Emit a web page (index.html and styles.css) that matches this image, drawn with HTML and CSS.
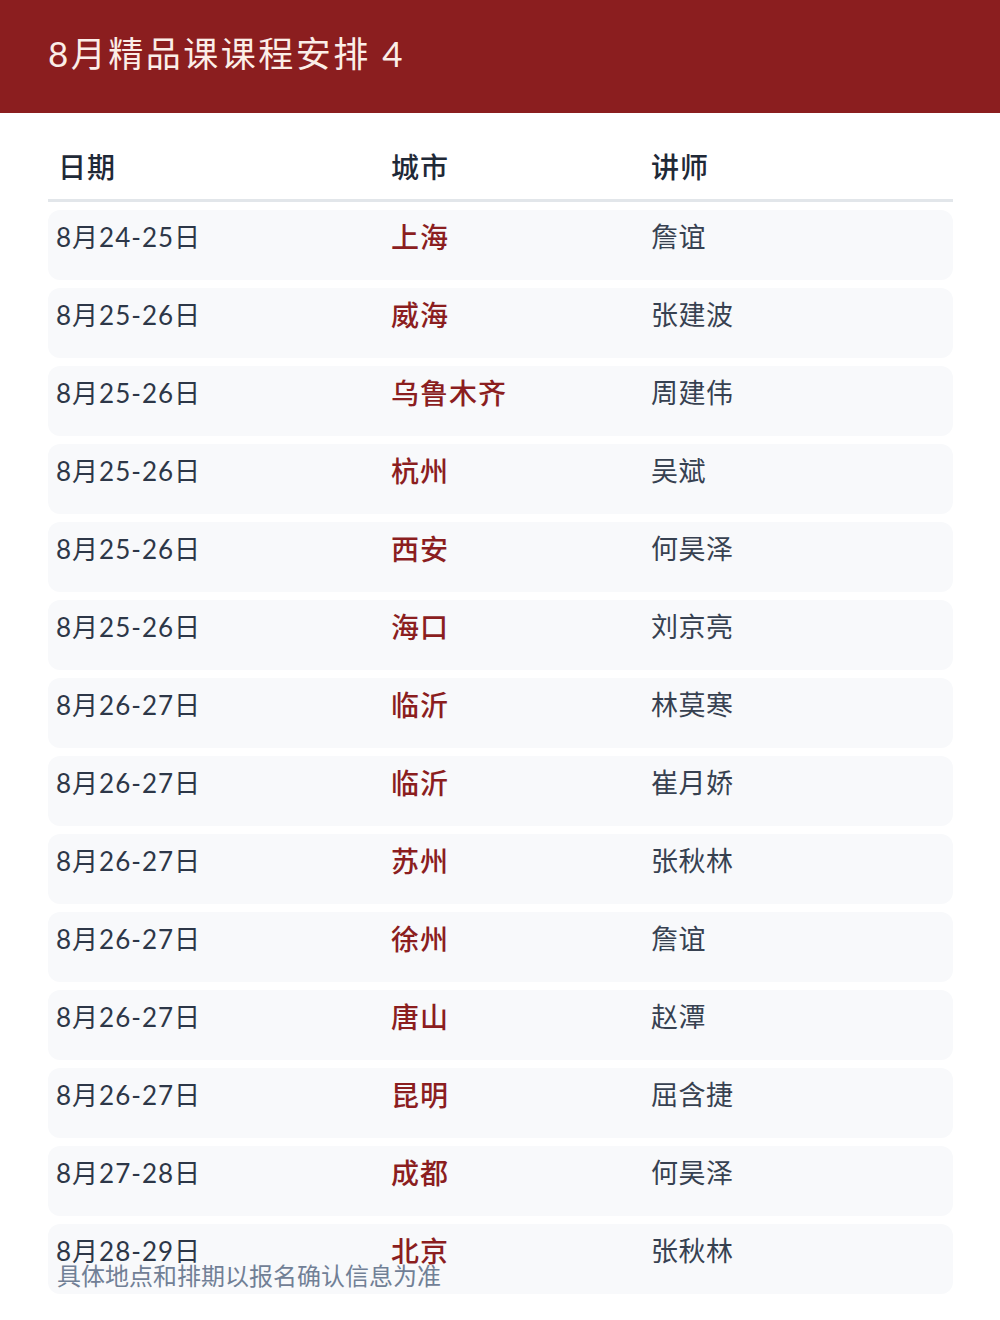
FILE: index.html
```html
<!DOCTYPE html>
<html lang="zh-CN">
<head>
<meta charset="utf-8">
<title>8月精品课课程安排 4</title>
<link rel="stylesheet" href="styles.css">
</head>
<body>
<header class="banner"><h1 class="title">8月精品课课程安排 4</h1></header>
<main class="content">
  <div class="thead">
    <div class="th">日期</div><div class="th">城市</div><div class="th">讲师</div>
  </div>
  <div class="rows">
    <div class="row"><div class="date">8月24-25日</div><div class="city">上海</div><div class="teacher">詹谊</div></div>
    <div class="row"><div class="date">8月25-26日</div><div class="city">威海</div><div class="teacher">张建波</div></div>
    <div class="row"><div class="date">8月25-26日</div><div class="city">乌鲁木齐</div><div class="teacher">周建伟</div></div>
    <div class="row"><div class="date">8月25-26日</div><div class="city">杭州</div><div class="teacher">吴斌</div></div>
    <div class="row"><div class="date">8月25-26日</div><div class="city">西安</div><div class="teacher">何昊泽</div></div>
    <div class="row"><div class="date">8月25-26日</div><div class="city">海口</div><div class="teacher">刘京亮</div></div>
    <div class="row"><div class="date">8月26-27日</div><div class="city">临沂</div><div class="teacher">林莫寒</div></div>
    <div class="row"><div class="date">8月26-27日</div><div class="city">临沂</div><div class="teacher">崔月娇</div></div>
    <div class="row"><div class="date">8月26-27日</div><div class="city">苏州</div><div class="teacher">张秋林</div></div>
    <div class="row"><div class="date">8月26-27日</div><div class="city">徐州</div><div class="teacher">詹谊</div></div>
    <div class="row"><div class="date">8月26-27日</div><div class="city">唐山</div><div class="teacher">赵潭</div></div>
    <div class="row"><div class="date">8月26-27日</div><div class="city">昆明</div><div class="teacher">屈含捷</div></div>
    <div class="row"><div class="date">8月27-28日</div><div class="city">成都</div><div class="teacher">何昊泽</div></div>
    <div class="row"><div class="date">8月28-29日</div><div class="city">北京</div><div class="teacher">张秋林</div></div>
  </div>
  <p class="note">具体地点和排期以报名确认信息为准</p>
</main>
</body>
</html>
```
FILE: styles.css
```css
* { box-sizing: border-box; }
html, body { margin: 0; padding: 0; }
body {
  width: 1000px;
  height: 1320px;
  background: #ffffff;
  font-family: Lato, "Noto Sans CJK SC", sans-serif;
  color: #2d3748;
  overflow: hidden;
}
.banner {
  height: 113px;
  background: #8b1e1f;
  padding: 0 48px;
  display: flex;
  align-items: flex-start;
}
.title {
  margin: 29px 0 0;
  font-size: 35px;
  line-height: 48px;
  font-weight: 400;
  color: #fbeee8;
  letter-spacing: 2.5px;
}
.content {
  position: relative;
  padding: 0 47px 0 48px;
}
.thead {
  display: grid;
  grid-template-columns: 335px 260px 1fr;
  padding: 0 8px 0 10px;
  height: 89px;
  align-items: end;
  border-bottom: 3px solid #e2e6ea;
}
.th {
  font-size: 28px;
  line-height: 40px;
  font-weight: 500;
  color: #1f2937;
  padding-bottom: 12px;
  letter-spacing: 1px;
}
.thead .th:nth-child(2), .thead .th:nth-child(3) { margin-left: -2px; }
.rows {
  display: flex;
  flex-direction: column;
  gap: 8px;
  margin-top: 8px;
}
.row {
  display: grid;
  grid-template-columns: 335px 260px 1fr;
  height: 70px;
  padding: 7px 8px 0;
  background: #f8f9fb;
  border-radius: 12px;
  align-items: start;
}
.date {
  font-size: 26px;
  line-height: 40px;
  color: #2d3748;
  letter-spacing: 1px;
}
.city {
  font-size: 28px;
  line-height: 40px;
  font-weight: 500;
  color: #8b1e1f;
  letter-spacing: 1px;
}
.teacher {
  font-size: 27px;
  line-height: 40px;
  color: #374151;
  letter-spacing: 0.5px;
}
.note {
  position: absolute;
  left: 57px;
  top: 1148px;
  margin: 0;
  font-size: 24px;
  line-height: 30px;
  color: #718096;
}
```
